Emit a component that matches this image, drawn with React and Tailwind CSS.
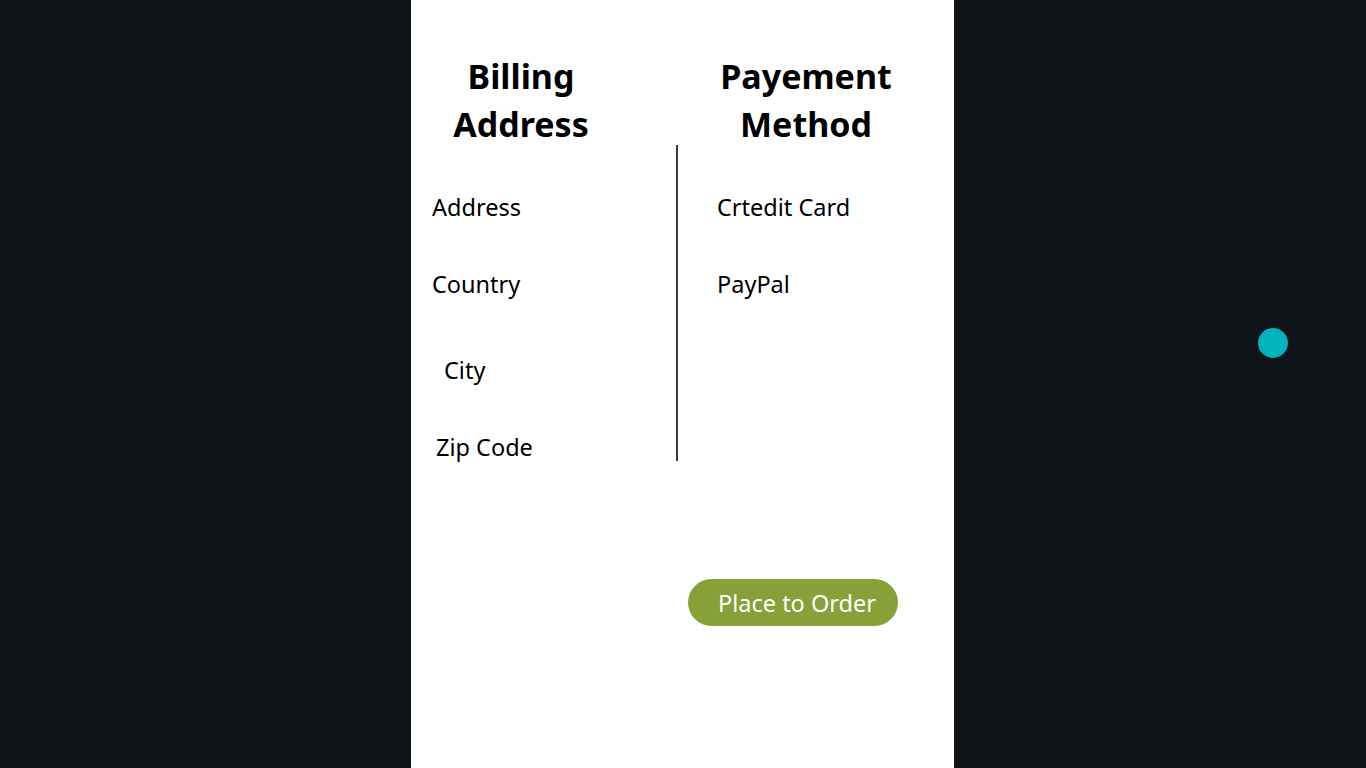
export default function App() {
	const font = { fontFamily: '"Noto Sans", "Open Sans", sans-serif' };

	return (
		<div className="relative w-full h-[768px] bg-[#0e1318] flex overflow-hidden" style={font}>
			<div className="ml-[411px] w-[543px] h-full bg-white text-black">
				<div className="flex pt-[52px]">
					<h2 className="w-[220px] text-center text-[34px] font-bold leading-[48px]">Billing Address</h2>
					<h2 className="ml-[48px] w-[254px] text-center text-[34px] font-bold leading-[48px]">Payement Method</h2>
				</div>
				<div className="flex -mt-[3px]">
					<div className="w-[265px] text-[23.5px] leading-[30px]">
						<div className="mt-[47px] ml-[21px]">Address</div>
						<div className="mt-[47px] ml-[21px]">Country</div>
						<div className="mt-[56px] ml-[33px]">City</div>
						<div className="mt-[47px] ml-[25px]">Zip Code</div>
					</div>
					<div className="w-[2px] h-[316px] bg-[#3a3a3a]"></div>
					<div className="flex-1 text-[23.5px] leading-[30px]">
						<div className="mt-[47px] ml-[39px]">Crtedit Card</div>
						<div className="mt-[47px] ml-[39px]">PayPal</div>
					</div>
				</div>
				<div className="mt-[117px] ml-[277px]">
					<button className="w-[210px] h-[47px] rounded-full bg-[#88a038] text-white text-[23.5px] leading-[30px] pl-[8px]">
						Place to Order
					</button>
				</div>
			</div>
			<div className="absolute left-[1258px] top-[328px] w-[30px] h-[30px] rounded-full bg-[#00b3bd]"></div>
		</div>
	);
}
